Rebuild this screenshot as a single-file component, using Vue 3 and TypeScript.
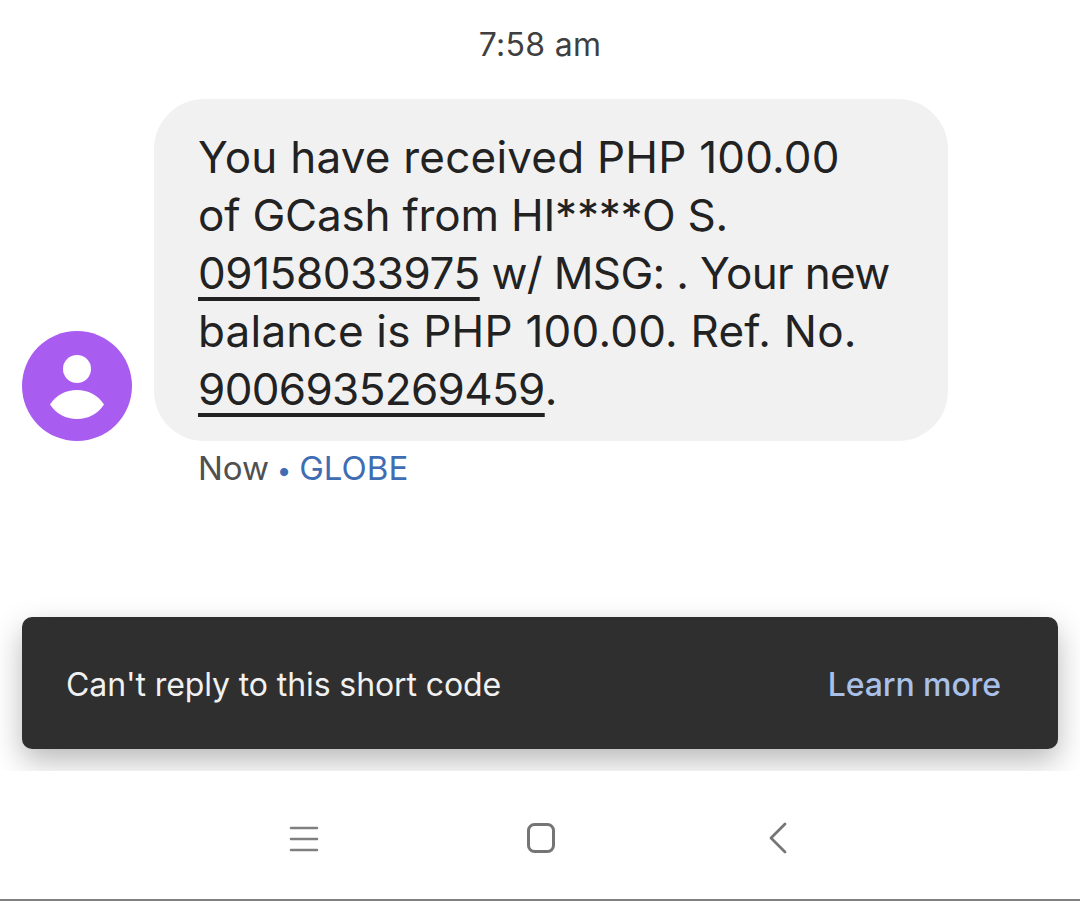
<template>
  <div class="screen">
    <div class="conversation">
      <div class="time">7:58 am</div>
      <div class="message">
        <div class="avatar">
          <svg width="110" height="110" viewBox="0 0 110 110">
            <circle cx="55" cy="55" r="55" fill="#a95cf0" />
            <circle cx="55" cy="38" r="14" fill="#fff" />
            <path d="M28 73.500 C34 64 44 59 55 59 C66 59 76 64 82 73.500 C76 83 66 88 55 88 C44 88 34 83 28 73.500 Z" fill="#fff" />
          </svg>
        </div>
        <div class="body">
          <div class="bubble">
            <span class="wide">You have received PHP 100.00</span><br />
            of GCash from HI****O S.<br />
            <span class="tight"><u class="phone">09158033975</u> w/ MSG: . Your new</span><br />
            <span class="wide">balance is PHP 100.00. Ref. No.</span><br />
            <span class="tight"><u>9006935269459</u></span>.
          </div>
          <div class="meta">Now <span class="dot">•</span> <span class="carrier">GLOBE</span></div>
        </div>
      </div>
      <div class="snackbar">
        <span>Can't reply to this short code</span>
        <span class="action">Learn more</span>
      </div>
    </div>
    <nav class="navbar">
      <svg width="32" height="32" viewBox="0 0 32 32" fill="none" stroke="#808080" stroke-width="2.6" stroke-linecap="round">
        <path d="M3 6 H29 M3 17 H29 M3 28 H29" />
      </svg>
      <svg width="32" height="32" viewBox="0 0 32 32" fill="none" stroke="#757575" stroke-width="3">
        <rect x="4.5" y="2.5" width="25" height="27" rx="6" />
      </svg>
      <svg width="32" height="32" viewBox="0 0 32 32" fill="none" stroke="#757575" stroke-width="2.8" stroke-linecap="round" stroke-linejoin="round">
        <path d="M25 2 L11 16 L25 30" />
      </svg>
    </nav>
    <div class="edge"></div>
  </div>
</template>

<script setup lang="ts">
</script>

<style>
html, body {
  margin: 0;
  background: #fff;
}
</style>

<style scoped>
.screen {
  width: 1080px;
  height: 901px;
  display: flex;
  flex-direction: column;
  font-family: Inter, Roboto, sans-serif;
  overflow: hidden;
}

.conversation {
  height: 771px;
  overflow: hidden;
  padding: 0 22px;
  box-sizing: border-box;
}

.time {
  height: 99px;
  padding-top: 25px;
  box-sizing: border-box;
  text-align: center;
  font-size: 32px;
  line-height: 40px;
  letter-spacing: 0.3px;
  color: #3f3f3f;
}

.message {
  display: flex;
  gap: 22px;
}

.avatar {
  align-self: flex-start;
  margin-top: 232px;
  height: 110px;
}

.bubble {
  width: 794px;
  height: 342px;
  box-sizing: border-box;
  background: #f1f1f1;
  border-radius: 50px;
  padding: 29px 0 0 44px;
  font-size: 44px;
  line-height: 58px;
  letter-spacing: -0.2px;
  color: #222;
}

.wide {
  letter-spacing: 0.22px;
}

.tight {
  letter-spacing: -0.65px;
}

.phone {
  letter-spacing: -0.45px;
}

.bubble u {
  text-decoration-thickness: 4px;
  text-underline-offset: 8px;
}

.meta {
  margin: 8px 0 0 44px;
  font-size: 33px;
  line-height: 38px;
  word-spacing: -1.5px;
  color: #505050;
}

.dot {
  color: #3f6db3;
  font-size: 26px;
}

.carrier {
  color: #3f6db3;
}

.snackbar {
  margin-top: 127px;
  height: 132px;
  background: #2f2f2f;
  border-radius: 10px;
  box-shadow: 0 12px 30px rgba(0, 0, 0, 0.28);
  display: flex;
  align-items: center;
  justify-content: space-between;
  padding: 3px 57px 0 44px;
  box-sizing: border-box;
  font-size: 32px;
  letter-spacing: -0.1px;
  color: #f1f1f1;
}

.action {
  color: #a9c0e8;
  font-weight: 500;
}

.navbar {
  flex: 1;
  display: flex;
  justify-content: center;
  align-items: center;
  gap: 204px;
  padding-top: 5px;
  background: #fff;
}

.edge {
  height: 2px;
  background: #808080;
}
</style>
